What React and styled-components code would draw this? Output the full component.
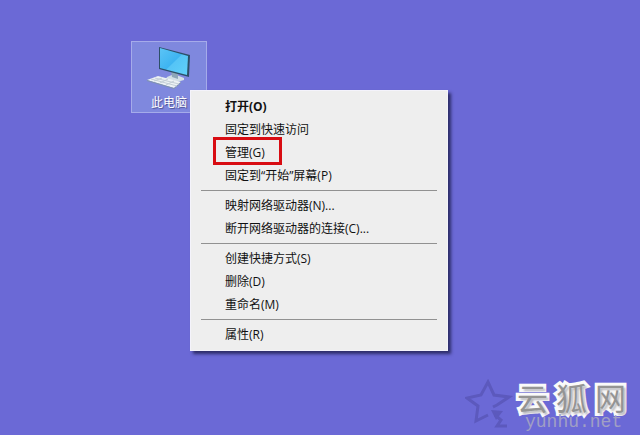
import styled, { createGlobalStyle } from "styled-components";

const GlobalStyle = createGlobalStyle`
  * {
    box-sizing: border-box;
  }

  body {
    margin: 0;
    font-family: "Open Sans", "Noto Sans CJK SC", sans-serif;
    font-size: 12px;
  }
`;

const Desktop = styled.main`
  position: relative;
  min-height: 100vh;
  padding: 41px 0 0 131px;
  display: flex;
  flex-direction: column;
  align-items: flex-start;
  justify-content: space-between;
  background-color: #6b69d6;
  overflow: hidden;
`;

const Shortcut = styled.button`
  width: 76px;
  height: 72px;
  padding: 4px 0 0;
  display: flex;
  flex-direction: column;
  align-items: center;
  gap: 4px;
  border: 1px solid #a5abea;
  background-color: #7f88de;
  color: white;
  font: inherit;
  line-height: 18px;
  text-shadow: 1px 1px 1px rgba(40, 40, 90, 0.6);
`;

const Menu = styled.div`
  position: absolute;
  top: 90px;
  left: 190px;
  width: 258px;
  padding: 4px 2px;
  border: 1px solid #f4f3fb;
  background-color: #eeeeee;
  box-shadow: 3px 3px 3px rgba(20, 20, 60, 0.7);
`;

const MenuItem = styled.button`
  position: relative;
  display: block;
  width: 100%;
  height: 23px;
  padding: 0 0 0 32px;
  border: none;
  background: none;
  color: #111111;
  font: inherit;
  font-weight: ${({ $bold }) => ($bold ? 700 : 400)};
  line-height: 23px;
  text-align: left;
  white-space: nowrap;

  &:hover {
    background-color: #ffffff;
  }
`;

const Separator = styled.hr`
  height: 1px;
  margin: 3px 8px;
  border: none;
  background-color: #919191;
`;

const Marker = styled.span`
  position: absolute;
  top: -4px;
  left: 20px;
  width: 69px;
  height: 28px;
  border: 3px solid #d80c12;
`;

const Watermark = styled.footer`
  align-self: flex-end;
  display: flex;
  align-items: flex-end;
  gap: 4px;
  padding: 0 14px 4px 0;
`;

const SiteMark = styled.div`
  display: flex;
  flex-direction: column;
`;

const SiteName = styled.strong`
  display: flex;
  gap: 8px;
  color: #949494;
  font-size: 31px;
  font-weight: 400;
  line-height: 30px;
  -webkit-text-stroke: 6px #fafafa;
  paint-order: stroke fill;
  text-shadow: 2px 2px 2px rgba(120, 120, 130, 0.5);
`;

const SiteUrl = styled.span`
  padding-left: 8px;
  color: #a09fc4;
  font-family: "Liberation Mono", monospace;
  font-size: 18px;
  line-height: 18px;
`;

const groups = [
  [
    { label: "打开(O)", bold: true },
    { label: "固定到快速访问" },
    { label: "管理(G)", marked: true },
    { label: "固定到“开始”屏幕(P)" },
  ],
  [{ label: "映射网络驱动器(N)..." }, { label: "断开网络驱动器的连接(C)..." }],
  [{ label: "创建快捷方式(S)" }, { label: "删除(D)" }, { label: "重命名(M)" }],
  [{ label: "属性(R)" }],
];

function ComputerIcon() {
  return (
    <svg width="44" height="44" viewBox="0 0 44 44" aria-hidden="true">
      <defs>
        <linearGradient id="screen" x1="0" y1="0" x2="1" y2="1">
          <stop offset="0" stopColor="#5cc4f6" />
          <stop offset="0.5" stopColor="#3db4f1" />
          <stop offset="0.52" stopColor="#55c4f6" />
          <stop offset="1" stopColor="#60d2fa" />
        </linearGradient>
      </defs>
      <path d="M20 31 L27 28 L37 32 L37 34 L30 36 L19 33Z" fill="#d3dfe6" />
      <path d="M24 25 L31 27 L31 33 L25 31Z" fill="#8ea6b8" />
      <path d="M12 1 L43 9 L42 31 L12 23Z" fill="#2c5068" />
      <path d="M13 2 L41 10 L40 29 L13 22Z" fill="url(#screen)" />
      <path d="M0 34 L11 30 L34 36 L27 42Z" fill="#edf2f4" />
      <path d="M0 34 L27 42 L34 36 L34 37 L27 43 L0 35Z" fill="#7f94ab" />
      <path
        d="M4 33 L30 40 M8 32 L32 38 M7 35 L15 32 M13 37 L21 33 M19 39 L27 35"
        stroke="#c3ced6"
        strokeWidth="1"
      />
    </svg>
  );
}

function StampStar() {
  return (
    <svg width="48" height="52" viewBox="4 6 48 52" aria-hidden="true">
      <path
        d="M32 34 L36 32 L48 24 L33 22 L27 9 L20 22 L6 25 L17 33 L15 48 L27 42"
        fill="none"
        stroke="#5c59bd"
        strokeWidth="3"
      />
      <path d="M30 37 L42 38 L35 47Z" fill="#5c59bd" />
      <path
        d="M34 42 L40 47 L36 53 L46 53"
        fill="none"
        stroke="#5c59bd"
        strokeWidth="3"
      />
    </svg>
  );
}

function MenuGroup({ items, first }) {
  return (
    <>
      {!first && <Separator />}
      {items.map((item) => (
        <MenuItem key={item.label} role="menuitem" $bold={item.bold}>
          {item.label}
          {item.marked && <Marker />}
        </MenuItem>
      ))}
    </>
  );
}

export default function App() {
  return (
    <Desktop>
      <GlobalStyle />
      <Shortcut>
        <ComputerIcon />
        此电脑
      </Shortcut>
      <Menu role="menu">
        {groups.map((items, index) => (
          <MenuGroup key={items[0].label} items={items} first={index === 0} />
        ))}
      </Menu>
      <Watermark>
        <StampStar />
        <SiteMark>
          <SiteName>
            {[..."云狐网"].map((char) => (
              <span key={char}>{char}</span>
            ))}
          </SiteName>
          <SiteUrl>yunhu.net</SiteUrl>
        </SiteMark>
      </Watermark>
    </Desktop>
  );
}
